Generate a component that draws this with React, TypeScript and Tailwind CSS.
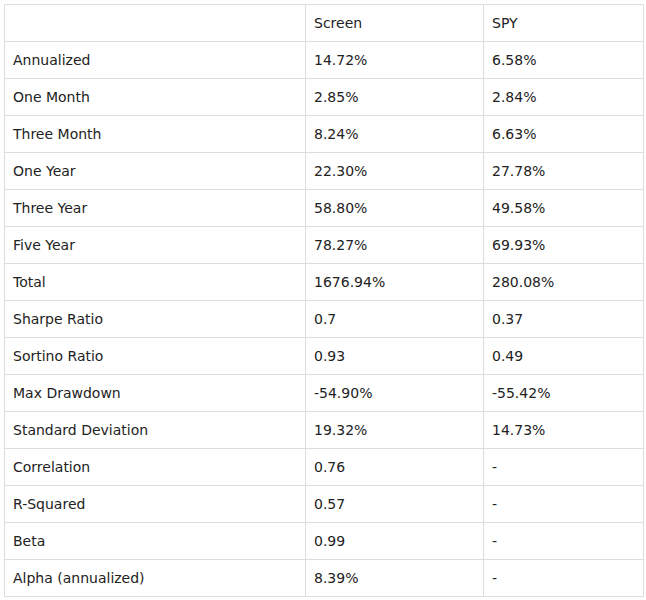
const rows: [string, string, string][] = [
  ['Annualized', '14.72%', '6.58%'],
  ['One Month', '2.85%', '2.84%'],
  ['Three Month', '8.24%', '6.63%'],
  ['One Year', '22.30%', '27.78%'],
  ['Three Year', '58.80%', '49.58%'],
  ['Five Year', '78.27%', '69.93%'],
  ['Total', '1676.94%', '280.08%'],
  ['Sharpe Ratio', '0.7', '0.37'],
  ['Sortino Ratio', '0.93', '0.49'],
  ['Max Drawdown', '-54.90%', '-55.42%'],
  ['Standard Deviation', '19.32%', '14.73%'],
  ['Correlation', '0.76', '-'],
  ['R-Squared', '0.57', '-'],
  ['Beta', '0.99', '-'],
  ['Alpha (annualized)', '8.39%', '-'],
];

const cell = 'border border-[#dddddd] h-[37px] px-2 py-0 align-middle text-left font-normal';

export default function App() {
  return (
    <div className="bg-white p-1 text-[14px] text-[#222222]" style={{ fontFamily: '"DejaVu Sans", Verdana, sans-serif' }}>
      <table className="border-collapse table-fixed w-[639px]">
        <colgroup>
          <col className="w-[301px]" />
          <col className="w-[178px]" />
          <col className="w-[160px]" />
        </colgroup>
        <thead>
          <tr>
            <th className={cell}></th>
            <th className={cell}>Screen</th>
            <th className={cell}>SPY</th>
          </tr>
        </thead>
        <tbody>
          {rows.map(([label, screen, spy]) => (
            <tr key={label}>
              <td className={cell}>{label}</td>
              <td className={cell}>{screen}</td>
              <td className={cell}>{spy}</td>
            </tr>
          ))}
        </tbody>
      </table>
    </div>
  );
}
